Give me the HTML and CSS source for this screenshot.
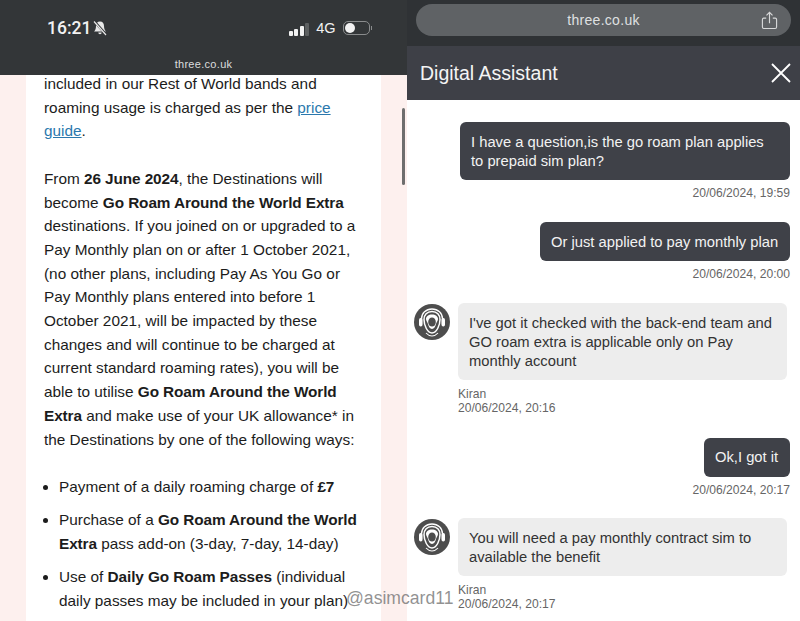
FILE: index.html
```html
<!DOCTYPE html>
<html lang="en">
  <head>
    <meta charset="UTF-8" />
    <title>Digital Assistant</title>
    <link rel="stylesheet" href="styles.css">
  </head>
  <body>
    <svg class="defs" width="0" height="0">
      <symbol id="agent" viewBox="0 0 36 36">
        <circle cx="18" cy="18" r="18" fill="#4d4d4d" />
        <path d="M7.500 20v-5C7.500 9 12 5 18 5s10.500 4 10.500 10v5" fill="none" stroke="#fff" stroke-width="1.300" />
        <rect x="5" y="14" width="3.500" height="8.500" rx="1.700" fill="#fff" />
        <rect x="27.500" y="14" width="3.500" height="8.500" rx="1.700" fill="#fff" />
        <path d="M18 7.500c-5 0-8 3.500-8 8 0 6 3.500 13.500 8 13.500s8-7.500 8-13.500c0-4.500-3-8-8-8z" fill="#4d4d4d" stroke="#fff" stroke-width="1.500" />
        <path d="M18 10.500c-3.500 0-6 2-6 4.500 0 2 1.500 3 2 5 .5 2.500 2 5 4 5s3.500-2.500 4-5c.5-2 2-3 2-5 0-2.500-2.500-4.500-6-4.500z" fill="#fff" />
        <ellipse cx="18" cy="18" rx="3.800" ry="4.500" fill="#4d4d4d" />
        <path d="M12 29c2 2.200 4 3 6 3s4-.8 6-3" fill="none" stroke="#fff" stroke-width="1.100" />
      </symbol>
    </svg>

    <main class="shot">
      <section class="phone">
        <header class="phone-top">
          <div class="status">
            <div class="status-left">
              <span class="clock">16:21</span>
              <svg class="bell" viewBox="0 0 16 16" width="16" height="16">
                <path d="M8 1.500c-2.600 0-4 2-4 4.500 0 3-1 4.500-2 5.500h12c-1-1-2-2.500-2-5.500 0-2.500-1.400-4.500-4-4.500z" fill="#e8e8e8" />
                <path d="M6.300 12.500a1.700 1.700 0 0 0 3.400 0z" fill="#e8e8e8" />
                <path d="M2 1l12.500 14" stroke="#333638" stroke-width="2.600" />
                <path d="M2 1.500l12 13.500" stroke="#e8e8e8" stroke-width="1.200" />
              </svg>
            </div>
            <div class="status-right">
              <div class="signal">
                <span class="sig sig-1"></span>
                <span class="sig sig-2"></span>
                <span class="sig sig-3"></span>
                <span class="sig sig-4"></span>
              </div>
              <span class="network">4G</span>
              <div class="battery"><span class="battery-level"></span></div>
              <span class="battery-tip"></span>
            </div>
          </div>
          <div class="phone-url">three.co.uk</div>
        </header>

        <article class="sheet">
          <p>included in our Rest of World bands and roaming usage is charged as per the <a href="#">price guide</a>.</p>
          <p>From <b>26 June 2024</b>, the Destinations will become <b>Go Roam Around the World Extra</b> destinations. If you joined on or upgraded to a Pay Monthly plan on or after 1 October 2021, (no other plans, including Pay As You Go or Pay Monthly plans entered into before 1 October 2021, will be impacted by these changes and will continue to be charged at current standard roaming rates), you will be able to utilise <b>Go Roam Around the World Extra</b> and make use of your UK allowance* in the Destinations by one of the following ways:</p>
          <ul>
            <li>Payment of a daily roaming charge of <b>£7</b></li>
            <li>Purchase of a <b>Go Roam Around the World Extra</b> pass add-on (3-day, 7-day, 14-day)</li>
            <li>Use of <b>Daily Go Roam Passes</b> (individual daily passes may be included in your plan)</li>
          </ul>
        </article>
        <div class="scroll-thumb"></div>
      </section>

      <section class="chat">
        <div class="chat-top">
          <div class="url-pill">
            <span>three.co.uk</span>
            <svg class="share" viewBox="0 0 18 20" width="17" height="19">
              <path d="M5.500 7.500H3a1.500 1.500 0 0 0-1.500 1.500v8A1.500 1.500 0 0 0 3 18.500h12a1.500 1.500 0 0 0 1.500-1.500V9A1.500 1.500 0 0 0 15 7.500h-2.500" fill="none" stroke="#d8d9da" stroke-width="1.200" />
              <path d="M9 13V1.500M5.800 4.500L9 1.300l3.200 3.200" fill="none" stroke="#d8d9da" stroke-width="1.200" />
            </svg>
          </div>
        </div>
        <header class="chat-head">
          <h1>Digital Assistant</h1>
          <svg class="close" viewBox="0 0 20 20" width="20" height="20">
            <path d="M1 1l18 18M19 1L1 19" stroke="#fff" stroke-width="1.800" />
          </svg>
        </header>

        <div class="messages">
          <div class="msg msg-out msg-a">
            <div class="bubble">I have a question,is the go roam plan applies to prepaid sim plan?</div>
            <div class="stamp">20/06/2024, 19:59</div>
          </div>
          <div class="msg msg-out msg-b">
            <div class="bubble">Or just applied to pay monthly plan</div>
            <div class="stamp">20/06/2024, 20:00</div>
          </div>
          <div class="msg msg-in msg-c">
            <svg class="avatar"><use href="#agent" /></svg>
            <div class="msg-body">
              <div class="bubble">I've got it checked with the back-end team and GO roam extra is applicable only on Pay monthly account</div>
              <div class="stamp">Kiran<br>20/06/2024, 20:16</div>
            </div>
          </div>
          <div class="msg msg-out msg-d">
            <div class="bubble">Ok,I got it</div>
            <div class="stamp">20/06/2024, 20:17</div>
          </div>
          <div class="msg msg-in msg-e">
            <svg class="avatar"><use href="#agent" /></svg>
            <div class="msg-body">
              <div class="bubble">You will need a pay monthly contract sim to available the benefit</div>
              <div class="stamp">Kiran<br>20/06/2024, 20:17</div>
            </div>
          </div>
        </div>
      </section>

      <div class="watermark">@asimcard11</div>
    </main>
  </body>
</html>
```

FILE: styles.css
```css
* {
  margin: 0;
  padding: 0;
  box-sizing: border-box;
}

html,
body {
  width: 800px;
  height: 621px;
  overflow: hidden;
  background: #fff;
  font-family: "Liberation Sans", Arial, sans-serif;
}

.defs {
  display: block;
  height: 0;
}

.shot {
  position: relative;
  display: flex;
  width: 800px;
  height: 621px;
  overflow: hidden;
}

/* left half */
.phone {
  position: relative;
  width: 407px;
  height: 621px;
  overflow: hidden;
  background: #fdf0ee;
}

.phone-top {
  position: relative;
  z-index: 2;
  height: 75px;
  background: #333638;
  color: #f2f2f2;
}

.status {
  display: flex;
  justify-content: space-between;
  align-items: center;
  height: 58px;
  padding: 0 35px 2px 47px;
}

.status-left,
.status-right,
.signal {
  display: flex;
  align-items: center;
}

.clock {
  font-family: Roboto, "Liberation Sans", sans-serif;
  font-size: 17.500px;
  font-weight: 500;
}

.bell {
  margin-left: 1px;
}

.signal {
  align-items: flex-end;
  gap: 1.500px;
  height: 13px;
  margin-top: 2px;
  margin-right: 7px;
}

.sig {
  width: 4px;
  border-radius: 1px;
  background: #f2f2f2;
}

.sig-1 {
  height: 5px;
}

.sig-2 {
  height: 7px;
}

.sig-3 {
  height: 10px;
}

.sig-4 {
  height: 13px;
  background: #5d6061;
}

.network {
  font-size: 14.500px;
  margin-right: 7px;
}

.battery {
  width: 27px;
  height: 14px;
  padding: 1px;
  border: 1px solid #8a8c8d;
  border-radius: 5px;
}

.battery-level {
  display: block;
  width: 10px;
  height: 10px;
  border-radius: 5px;
  background: #f2f2f2;
}

.battery-tip {
  width: 1.500px;
  height: 4px;
  margin-left: 1px;
  background: #8a8c8d;
}

.phone-url {
  font-size: 11px;
  text-align: center;
  letter-spacing: 0.3px;
  color: #dcdddd;
}

.sheet {
  width: 355px;
  height: 560px;
  margin: -3px 0 0 26px;
  padding: 0 20px 0 18px;
  background: #fff;
  color: #1c1c1c;
  font-size: 15.350px;
  line-height: 23.700px;
}

.sheet p {
  margin-bottom: 23.700px;
}

.sheet b {
  letter-spacing: -0.1px;
}

.sheet a {
  color: #2b78ad;
}

.sheet ul {
  padding-left: 15px;
  list-style: disc;
}

.sheet li {
  margin-bottom: 9.500px;
}

.scroll-thumb {
  position: absolute;
  top: 108px;
  left: 402px;
  width: 3px;
  height: 77px;
  border-radius: 2px;
  background: #6e6e6e;
}

/* right half */
.chat {
  flex: 1;
  height: 621px;
  overflow: hidden;
  background: #fff;
}

.chat-top {
  height: 46px;
  padding: 4px 9px 0 9px;
  background: #2f3235;
}

.url-pill {
  display: flex;
  align-items: center;
  justify-content: center;
  position: relative;
  height: 32px;
  border-radius: 16px;
  background: #5f6265;
  color: #dfe0e1;
  font-size: 14px;
  letter-spacing: 0.3px;
}

.share {
  position: absolute;
  top: 7px;
  right: 13px;
}

.chat-head {
  display: flex;
  align-items: center;
  justify-content: space-between;
  height: 54px;
  padding: 0 9px 0 13px;
  background: #3e4047;
  color: #f4f4f4;
}

.chat-head h1 {
  font-size: 19.500px;
  font-weight: 400;
}

.messages {
  padding-top: 22px;
  font-size: 14.750px;
  line-height: 19px;
}

.msg-out {
  display: flex;
  flex-direction: column;
  align-items: flex-end;
  padding-right: 10px;
}

.msg-out .bubble {
  background: #3f4148;
  color: #f2f2f2;
}

.bubble {
  padding: 11px 11px 9px;
  border-radius: 6px;
}

.msg-a .bubble {
  width: 330px;
}

.msg-b .bubble {
  width: 250px;
}

.msg-d .bubble {
  width: 86px;
  padding: 10px 11px;
}

.msg-in {
  display: flex;
  padding-left: 7px;
}

.avatar {
  flex: none;
  width: 36px;
  height: 36px;
  margin: 1px 8px 0 0;
}

.msg-body {
  width: 329px;
}

.msg-in .bubble {
  background: #ededed;
  color: #333;
}

.stamp {
  margin-top: 6px;
  font-size: 12.100px;
  line-height: 14px;
  color: #666;
}

.msg-in .stamp {
  margin-top: 7px;
}

.msg-b {
  margin-top: 22px;
}

.msg-c {
  margin-top: 22px;
}

.msg-d {
  margin-top: 23px;
}

.msg-e {
  margin-top: 21px;
}

.watermark {
  position: absolute;
  top: 588px;
  left: 346px;
  font-size: 17.600px;
  color: rgba(110, 110, 110, 0.75);
}
```
